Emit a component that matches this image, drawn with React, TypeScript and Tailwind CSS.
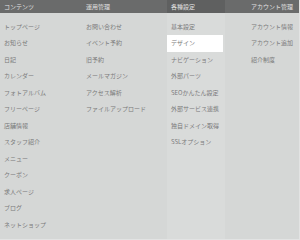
import React from "react";

const columns = [
  {
    title: "コンテンツ",
    width: "w-[82px]",
    pad: "pl-[4px]",
    items: ["トップページ", "お知らせ", "日記", "カレンダー", "フォトアルバム", "フリーページ", "店舗情報", "スタッフ紹介", "メニュー", "クーポン", "求人ページ", "ブログ", "ネットショップ"],
  },
  {
    title: "運用管理",
    width: "w-[85px]",
    pad: "pl-[4px]",
    items: ["お問い合わせ", "イベント予約", "旧予約", "メールマガジン", "アクセス解析", "ファイルアップロード"],
  },
  {
    title: "各種設定",
    width: "w-[58px]",
    pad: "pl-[4px]",
    active: true,
    items: ["基本設定", "デザイン", "ナビゲーション", "外部パーツ", "SEOかんたん設定", "外部サービス連携", "独自ドメイン取得", "SSLオプション"],
  },
  {
    title: "アカウント管理",
    width: "flex-1",
    pad: "pl-[26px]",
    items: ["アカウント情報", "アカウント追加", "紹介制度"],
  },
];

export default function App() {
  return (
    <div
      className="w-[300px] h-[240px] flex bg-[#d5d7d6] overflow-hidden border-r border-b border-[#e2e3e3]"
      style={{ fontFamily: '"Noto Sans CJK JP", "Noto Sans", sans-serif' }}
    >
      {columns.map((col) => (
        <div key={col.title} className={`${col.width} flex flex-col ${col.active ? "bg-[#d9dbda]" : ""}`}>
          <div
            className={`h-[13px] flex items-center ${col.pad} text-[6px] leading-none text-[#e2e2e2] ${
              col.active ? "bg-[#5f6060]" : "bg-[#6a6b6b]"
            }`}
          >
            {col.title}
          </div>
          <ul className="pt-[5.5px] flex flex-col">
            {col.items.map((item) => (
              <li
                key={item}
                className={`h-[16.5px] flex items-center ${col.pad} text-[6px] leading-none whitespace-nowrap text-[#7a7a7a] ${
                  item === "デザイン" ? "bg-white mr-[2px]" : ""
                }`}
              >
                {item}
              </li>
            ))}
          </ul>
        </div>
      ))}
    </div>
  );
}
